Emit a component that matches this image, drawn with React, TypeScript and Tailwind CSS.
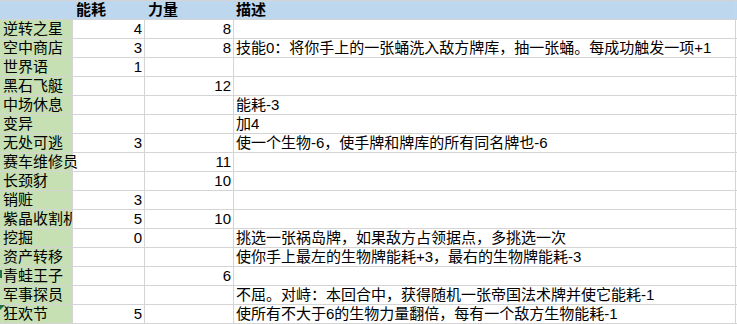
import React from 'react';

type Row = {
  name: string;
  cost?: string;
  power?: string;
  desc?: string;
  clip?: boolean;
  mark?: 'corner' | 'edge';
};

const rows: Row[] = [
  { name: '逆转之星', cost: '4', power: '8' },
  { name: '空中商店', cost: '3', power: '8', desc: '技能0：将你手上的一张蛹洗入敌方牌库，抽一张蛹。每成功触发一项+1' },
  { name: '世界语', cost: '1' },
  { name: '黑石飞艇', power: '12' },
  { name: '中场休息', desc: '能耗-3' },
  { name: '变异', desc: '加4' },
  { name: '无处可逃', cost: '3', desc: '使一个生物-6，使手牌和牌库的所有同名牌也-6' },
  { name: '赛车维修员', power: '11' },
  { name: '长颈豺', power: '10' },
  { name: '销赃', cost: '3' },
  { name: '紫晶收割机', cost: '5', power: '10', clip: true },
  { name: '挖掘', cost: '0', desc: '挑选一张祸岛牌，如果敌方占领据点，多挑选一次' },
  { name: '资产转移', desc: '使你手上最左的生物牌能耗+3，最右的生物牌能耗-3' },
  { name: '青蛙王子', power: '6', mark: 'edge' },
  { name: '军事探员', desc: '不屈。对峙：本回合中，获得随机一张帝国法术牌并使它能耗-1' },
  { name: '狂欢节', cost: '5', desc: '使所有不大于6的生物力量翻倍，每有一个敌方生物能耗-1', mark: 'corner' },
];

export default function App() {
  return (
    <div
      className="w-[737px] h-[324px] bg-white overflow-hidden text-[15px] leading-[18px] text-black"
      style={{ fontFamily: '"Liberation Sans", "Noto Sans CJK SC", sans-serif' }}
    >
      {/* header */}
      <div className="flex h-[20px] border-t border-b border-[#d4d4d4] bg-[#bdd7ee] font-bold">
        <div className="w-[73px] shrink-0"></div>
        <div className="w-[72px] shrink-0 pl-[3px]">能耗</div>
        <div className="w-[89px] shrink-0 pl-[3px] border-r border-[#c8d3de]">力量</div>
        <div className="w-[502px] shrink-0 pl-[2px] border-r border-[#d4d4d4]">描述</div>
      </div>

      {rows.map((r) => (
        <div key={r.name} className="flex h-[19px] border-b border-[#d4d4d4]">
          <div
            className={`relative w-[73px] shrink-0 bg-[#c6e0b4] border-r border-[#d4d4d4] pl-[3px] whitespace-nowrap ${
              r.clip ? 'overflow-hidden' : ''
            }`}
          >
            {r.mark === 'corner' && (
              <span className="absolute left-0 top-0 w-0 h-0 border-t-[5px] border-r-[5px] border-t-[#217346] border-r-transparent"></span>
            )}
            {r.mark === 'edge' && (
              <span className="absolute left-0 top-[3px] w-[2px] h-[8px] bg-[#217346]"></span>
            )}
            {r.name}
          </div>
          <div className="w-[72px] shrink-0 border-r border-[#d4d4d4] text-right pr-[2px]">{r.cost}</div>
          <div className="w-[89px] shrink-0 border-r border-[#d4d4d4] text-right pr-[2px]">{r.power}</div>
          <div className="w-[502px] shrink-0 border-r border-[#d4d4d4] pl-[2px] whitespace-nowrap">{r.desc}</div>
        </div>
      ))}
    </div>
  );
}
